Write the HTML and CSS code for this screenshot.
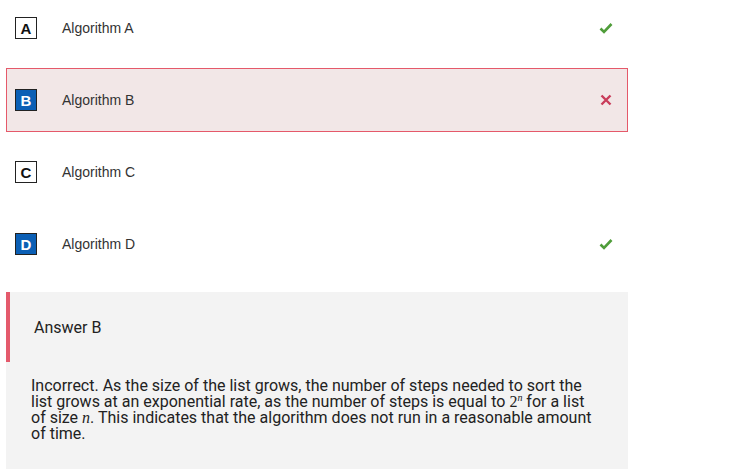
FILE: index.html
```html
<!DOCTYPE html>
<html>
<head>
<meta charset="utf-8">
<link rel="stylesheet" href="styles.css">
</head>
<body>
<div class="quiz">
  <div class="options">
    <div class="option">
      <span class="badge">A</span>
      <span class="label">Algorithm A</span>
      <span class="mark"><svg width="14" height="12" viewBox="0 0 14 12"><path d="M1.5 6.5 L5 10 L12.5 2" fill="none" stroke="#4f9d3a" stroke-width="2.6"/></svg></span>
    </div>
    <div class="option wrong">
      <span class="badge filled">B</span>
      <span class="label">Algorithm B</span>
      <span class="mark"><svg width="12" height="12" viewBox="0 0 12 12"><path d="M1.5 1.5 L10.5 10.5 M10.5 1.5 L1.5 10.5" fill="none" stroke="#c93c5a" stroke-width="2.4"/></svg></span>
    </div>
    <div class="option">
      <span class="badge">C</span>
      <span class="label">Algorithm C</span>
      <span class="mark"></span>
    </div>
    <div class="option">
      <span class="badge filled">D</span>
      <span class="label">Algorithm D</span>
      <span class="mark"><svg width="14" height="12" viewBox="0 0 14 12"><path d="M1.5 6.5 L5 10 L12.5 2" fill="none" stroke="#4f9d3a" stroke-width="2.6"/></svg></span>
    </div>
  </div>
  <div class="feedback">
    <div class="answer">Answer B</div>
    <p class="explain">Incorrect. As the size of the list grows, the number of steps needed to sort the list grows at an exponential rate, as the number of steps is equal to <span class="math">2<sup>n</sup></span> for a list of size <span class="math var">n</span>. This indicates that the algorithm does not run in a reasonable amount of time.</p>
  </div>
</div>
</body>
</html>
```
FILE: styles.css
```css
html, body {
  margin: 0;
  padding: 0;
  background: #ffffff;
}
body {
  font-family: "Liberation Sans", Arial, sans-serif;
  color: #333333;
}
.quiz {
  width: 622px;
  margin-left: 6px;
  margin-top: -4px;
}
.options {
  display: flex;
  flex-direction: column;
  gap: 8px;
}
.option {
  height: 64px;
  box-sizing: border-box;
  border: 1px solid transparent;
  display: flex;
  align-items: center;
  padding-left: 8px;
  padding-right: 14px;
}
.option.wrong {
  background: #f2e7e7;
  border-color: #e5596a;
}
.badge {
  width: 22px;
  height: 22px;
  box-sizing: border-box;
  border: 1.5px solid #222222;
  display: flex;
  align-items: center;
  justify-content: center;
  font-weight: bold;
  font-size: 15px;
  color: #111111;
  background: #ffffff;
}
.badge.filled {
  background: #0b5fb5;
  color: #ffffff;
}
.label {
  margin-left: 25px;
  font-size: 14px;
  color: #333333;
  flex: 1;
}
.mark {
  width: 14px;
  display: flex;
  justify-content: center;
}
.feedback {
  margin-top: 16px;
  background: #f3f3f3;
  padding-bottom: 40px;
}
.answer {
  border-left: 4px solid #e45a6c;
  height: 70px;
  box-sizing: border-box;
  display: flex;
  align-items: center;
  padding-left: 24px;
  font-family: Roboto, sans-serif;
  font-size: 16px;
  color: #222222;
}
.explain {
  margin: 16px 0 0 0;
  padding: 0 26px 0 25px;
  font-family: Roboto, sans-serif;
  font-size: 16px;
  line-height: 16px;
  color: #222222;
}
.math {
  font-family: "Liberation Serif", "DejaVu Serif", serif;
  font-size: 16px;
}
.math sup {
  font-style: italic;
  font-size: 10px;
  vertical-align: 6px;
  line-height: 0;
}
.math.var {
  font-style: italic;
}
```
